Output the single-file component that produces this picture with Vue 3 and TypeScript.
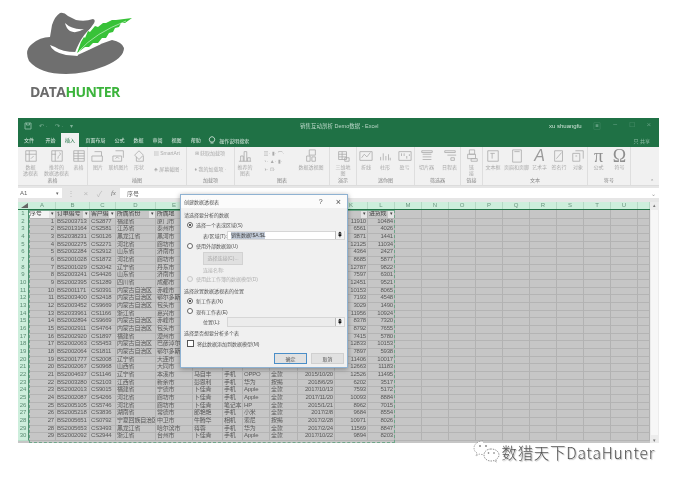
<script setup lang="ts">
type RibbonItem = { label: string; w: number; d?: string; glyph?: string };
type RibbonGroup = { name: string; w: number; items: RibbonItem[] };

const box = 'M2 2h12v12H2z';
const ribbon: RibbonGroup[] = [
  { name: '表格', w: 70, items: [
    { label: '数据\n透视表', w: 26, d: box + 'M2 6h12M6 2v12M8 11l3-3' },
    { label: '推荐的\n数据透视表', w: 26, d: box + 'M2 6h5M6 2v12M9 11q0-3 2-4t0-3' },
    { label: '表格', w: 18, d: box + 'M2 5h12M2 8h12M2 11h12M7 2v12' },
  ] },
  { name: '插图', w: 99, items: [
    { label: '图片', w: 21, d: 'M4 3h8v5M1 8h12v6H1z' },
    { label: '联机图片', w: 20, d: 'M4 2h9v8M1 8h10v6H1zM4 11l2-2 2 2' },
    { label: '形状', w: 21, d: 'M8 2l5 5-5 5-5-5zM5 9v5h8V8' },
    { label: '', w: 37, glyph: '▤ SmartArt\n\n◈ 屏幕截图 ·' },
  ] },
  { name: '加载项', w: 48, items: [
    { label: '', w: 48, glyph: '⊞ 获取加载项\n\n♦ 我的加载项 ·' },
  ] },
  { name: '图表', w: 95, items: [
    { label: '推荐的\n图表', w: 19, d: 'M3 14V8h3v6M7 14V3h3v11M11 14v-4h3v4M1 14h14' },
    { label: '', w: 39, glyph: '▥· ▮· ⌒·\n◔· ▲· ▮·\n◑· ⊡·' },
    { label: '数据透视图', w: 35, d: 'M6 1h7v6H6zM3 8h4v6H3zM9 9h4v5H9z' },
  ] },
  { name: '演示', w: 27, items: [
    { label: '三维地\n图', w: 27, d: 'M3 3h9v9H3zM3 6h9M3 9h9M7 3v9M10 10v4h5v-4z' },
  ] },
  { name: '迷你图', w: 58, items: [
    { label: '折线', w: 19, d: 'M1 3h14v10H1zM3 10l3-4 3 3 4-5' },
    { label: '柱形', w: 19, d: 'M3 13V9M6 13V5M9 13V8M12 13V6M14 13v-3' },
    { label: '盈亏', w: 20, d: 'M1 3h14v10H1zM4 8V5M7 8V5M10 8v3M13 8V6' },
  ] },
  { name: '筛选器', w: 46, items: [
    { label: '切片器', w: 24, d: 'M2 2h12v2H2zM3 6h10M3 9h10M3 12h10' },
    { label: '日程表', w: 22, d: 'M2 2h12v2H2zM5 7h10M9 10h4v3H9z' },
  ] },
  { name: '链接', w: 22, items: [
    { label: '链\n接', w: 22, d: 'M5 1h6v5H5zM3 6h9v5H3zM7 11h7v3H7z' },
  ] },
  { name: '文本', w: 105, items: [
    { label: '文本框', w: 21, d: 'M2 2h12v12H2zM5 5h5M7 5v6' },
    { label: '页眉和页脚', w: 26, d: 'M3 1h10v14H3zM5 3h6' },
    { label: '艺术字', w: 20, glyph: 'A' },
    { label: '签名行', w: 19, d: 'M3 2h9v12H3zM5 11l6-7' },
    { label: '对象', w: 19, d: 'M2 5h8v9H2zM5 2h9v9M5 8h2' },
  ] },
  { name: '符号', w: 43, items: [
    { label: '公式', w: 21, glyph: 'π' },
    { label: '符号', w: 21, glyph: 'Ω' },
  ] },
];

const tabs = ['文件', '开始', '插入', '页面布局', '公式', '数据', '审阅', '视图', '帮助'];

const colWidths = [27, 34, 26, 40, 37, 30, 20, 27, 28, 37, 33, 27, 27, 27, 27, 27, 27, 27, 27, 27, 27, 12];
const letters = 'ABCDEFGHIJKLMNOPQRSTUV'.split('');
letters[21] = '';
const template = `11px ${colWidths.map((w) => w + 'px').join(' ')}`;

// 客户 to 日期 sit under the dialog, so they stay blank here
const head = ['序号', '订单编号', '客户编', '所属省份', '所属地', '', '', '', '', '', '价格', '进货成'];
const raw = `BS2003713 CS2877 福建省 厦门市 - - - - - 11910 10484
BS2013164 CS2581 江苏省 泰州市 - - - - - 6561 4026
BS2038231 CS0126 黑龙江省 黑河市 - - - - - 3871 1441
BS2002275 CS2271 河北省 廊坊市 - - - - - 12125 11034
BS2002284 CS2912 山东省 济南市 - - - - - 4364 2427
BS2001028 CS1872 河北省 廊坊市 - - - - - 8685 5877
BS2001029 CS2042 辽宁省 丹东市 - - - - - 12787 9822
BS2003241 CS4426 山东省 济南市 - - - - - 7597 6301
BS2002395 CS1289 四川省 成都市 - - - - - 12451 9521
BS2001171 CS0391 内蒙古自治区 赤峰市 - - - - - 10153 8065
BS2003400 CS2418 内蒙古自治区 鄂尔多斯 - - - - - 7193 4548
BS2003452 CS9669 内蒙古自治区 包头市 - - - - - 3029 1490
BS2033961 CS1166 浙江省 嘉兴市 - - - - - 11956 10924
BS2002894 CS9669 内蒙古自治区 赤峰市 - - - - - 8378 7320
BS2002911 CS4764 内蒙古自治区 包头市 - - - - - 8792 7655
BS2002920 CS1897 福建省 漳州市 - - - - - 7415 5780
BS2002063 CS5453 内蒙古自治区 巴彦淖尔 - - - - - 12833 10153
BS2002064 CS1811 内蒙古自治区 鄂尔多斯 - - - - - 7897 5938
BS2001777 CS2008 辽宁省 大连市 - - - - - 11406 10017
BS2002067 CS0968 山西省 大同市 - - - - - 12663 11183
BS2004637 CS1146 辽宁省 本溪市 马自丰 手机 OPPO 全款 2015/10/20 12526 11495
BS2003280 CS2103 江西省 新余市 彭恩利 手机 华为 按揭 2018/6/29 6202 3517
BS2002013 CS9015 福建省 宁德市 卜佳青 手机 Apple 全款 2017/10/13 7593 5172
BS2002087 CS4266 河北省 廊坊市 卜佳青 手机 Apple 全款 2017/11/20 10093 8884
BS2005105 CS5746 河北省 廊坊市 卜佳青 笔记本 HP 全款 2015/1/21 8962 7015
BS2005218 CS3836 湖南省 常德市 郎艳艳 手机 小米 全款 2017/2/8 9684 8554
BS2005651 CS0792 宁夏回族自治区 中卫市 牛腾华 相机 索尼 按揭 2017/2/28 10971 8026
BS2005653 CS3493 黑龙江省 哈尔滨市 蒋蓉 手机 华为 全款 2017/2/24 11569 8847
BS2002092 CS2944 浙江省 台州市 卜佳青 手机 Apple 全款 2017/10/22 9894 8203`;

const rows = raw.split('\n').map((line, i) => {
  const p = line.split(' ').map((v) => (v === '-' ? '' : v));
  return [String(i + 1), ...p];
});
const numeric = new Set([0, 9, 10, 11]);
const blanks = Array.from({ length: 10 }, () => '');
</script>

<template>
  <div class="page">
    <header class="logo">
      <svg class="hat" width="140" height="86" viewBox="0 0 140 86">
        <path fill="#6f6f6f" d="M60 13Q64 12 68 16L76 20Q85 22 93 19Q97 20 92 26Q85 35 80 46L78 52L112 40Q122 42 124 48Q124 58 105 66Q85 74 66 74Q40 74 29 61Q24 50 32 44Q40 37 50 37L52 25Q55 16 60 13Z" />
        <path fill="#fff" d="M65 23Q72 30 84 29Q76 34 70 31Q66 28 65 23ZM50 45Q52 52 66 55L78 56L76 52Q62 52 55 47Z" />
        <path fill="none" stroke="#fff" stroke-width="3" d="M76 54Q84 32 98 25M100 43Q88 49 76 54" />
        <path fill="#38c238" d="M77 53L81 42L84 37L85 38L88 31L90 32L95 26L98 27L103 23L106 23L112 20L116 20L132 18L125 23L121 23L119 27L115 28L113 32L109 33L106 38L102 38L98 43L93 43L89 47L85 47Z" />
        <path fill="none" stroke="#e8f8e8" stroke-width=".6" d="M79 51Q95 33 126 21" />
      </svg>
      <div class="brand"><span>DATA</span><em>HUNTER</em></div>
    </header>

    <section class="excel">
      <div class="titlebar">
        <div class="qat">
          <svg width="8" height="8" viewBox="0 0 8 8"><path d="M1 1h6v6H1zM2.500 1v2h3V1" fill="none" stroke="#7fb398" /></svg>
          <span>↶ ·</span><span>↷ ·</span><span>▾</span>
        </div>
        <div class="doc">销售互动剖析 Demo数据 - Excel</div>
        <div class="user">xu shuangfu</div>
        <div class="winctl"><span>▣</span><span>−</span><span>□</span><span>×</span></div>
      </div>

      <nav class="tabs">
        <span v-for="t in tabs" :key="t" class="tab" :class="{ active: t === '插入' }">{{ t }}</span>
        <svg class="bulb" width="8" height="9" viewBox="0 0 8 9"><path d="M2.500 7h3M1.800 5a2.700 2.700 0 1 1 4.400 0l-.7 1h-3z" fill="none" stroke="#dfeee6" stroke-width=".8" /></svg>
        <span class="search">操作说明搜索</span>
        <span class="share">只 共享</span>
      </nav>

      <div class="ribbon">
        <div v-for="g in ribbon" :key="g.name" class="group" :style="{ width: g.w + 'px' }">
          <div class="items">
            <div v-for="(it, idx) in g.items" :key="idx" class="item" :style="{ width: it.w + 'px' }">
              <svg v-if="it.d" width="14" height="14" viewBox="0 0 16 16"><path :d="it.d" fill="none" stroke="#a9a9a9" stroke-width=".9" /></svg>
              <div v-else-if="it.label" class="bigglyph" :class="{ wordart: it.glyph === 'A' }">{{ it.glyph }}</div>
              <div v-if="!it.label" class="multi">{{ it.glyph }}</div>
              <div v-if="it.label" class="ilabel">{{ it.label }}</div>
            </div>
          </div>
          <div class="gname">{{ g.name }}</div>
        </div>
        <div class="collapse">⌃</div>
      </div>

      <div class="formula">
        <div class="namebox">A1<i>▾</i></div>
        <div class="fbtns"><span>⋮</span><span>×</span><span>✓</span><em>fx</em></div>
        <div class="finput">序号<i>⌄</i></div>
      </div>

      <div class="sheet-wrap">
        <div class="sheet">
          <div class="row colhead" :style="{ gridTemplateColumns: template }">
            <div class="corner"></div>
            <div v-for="l in letters" :key="l" class="hcell">{{ l }}</div>
          </div>
          <div class="row" :style="{ gridTemplateColumns: template }">
            <div class="rnum">1</div>
            <div v-for="(h, i) in head" :key="i" class="cell thead" :class="{ on: i === 0 }">{{ h }}<b v-if="h">▾</b></div>
            <div v-for="(b, i) in blanks" :key="i" class="cell"></div>
          </div>
          <div v-for="(r, ri) in rows" :key="ri" class="row" :style="{ gridTemplateColumns: template }">
            <div class="rnum">{{ ri + 2 }}</div>
            <div v-for="(c, ci) in r" :key="ci" class="cell" :class="{ num: numeric.has(ci) }">{{ c }}</div>
            <div v-for="(b, i) in blanks" :key="i" class="cell"></div>
          </div>
          <div class="ants"></div>
        </div>
        <div class="vscroll"><span>▴</span><i></i><span>▾</span></div>

        <div class="dialog">
          <div class="dtitle"><span>创建数据透视表</span><span class="q">?</span><span class="x">×</span></div>
          <div class="dbody">
            <div class="line sec">请选择要分析的数据</div>
            <div class="line opt"><i class="radio on"></i>选择一个表或区域(S)</div>
            <div class="line field">
              <label>表/区域(T):</label>
              <div class="input"><span class="sel">销售数据!$A:$L</span><b>⇞</b></div>
            </div>
            <div class="line opt"><i class="radio"></i>使用外部数据源(U)</div>
            <div class="connect">选择连接(C)...</div>
            <div class="line dim ind">连接名称:</div>
            <div class="line opt dim"><i class="radio off"></i>使用此工作簿的数据模型(D)</div>
            <div class="line sec gap">选择放置数据透视表的位置</div>
            <div class="line opt"><i class="radio on"></i>新工作表(N)</div>
            <div class="line opt"><i class="radio"></i>现有工作表(E)</div>
            <div class="line field">
              <label>位置(L):</label>
              <div class="input grey"><b>⇞</b></div>
            </div>
            <div class="line sec">选择是否想要分析多个表</div>
            <div class="line opt check"><i class="cb"></i>将此数据添加到数据模型(M)</div>
            <div class="actions"><button class="ok">确定</button><button>取消</button></div>
          </div>
        </div>
      </div>
    </section>

    <footer class="mark">
      <svg width="28" height="24" viewBox="0 0 28 24">
        <path d="M10 1C5 1 1 4 1 8c0 2 1 4 3 5l-1 3 3-2c1 .4 3 .6 4 .5" fill="#fff" stroke="#888" stroke-width=".7" stroke-dasharray="1.500 1" />
        <path d="M18 9c-4 0-7 2.500-7 6s3 6 7 6c1 0 2 0 3-.5l2.500 1.500-.7-2.500c2-1 3.200-2.700 3.200-4.500 0-3.500-3.500-6-8-6z" fill="#fff" stroke="#666" stroke-width=".7" stroke-dasharray="1.500 1" />
        <circle cx="7" cy="6" r="1" fill="#888" /><circle cx="13" cy="6" r="1" fill="#888" />
        <circle cx="15.500" cy="13" r=".8" fill="#666" /><circle cx="21" cy="13" r=".8" fill="#666" />
      </svg>
      <span><u>数猎天下</u><em>DataHunter</em></span>
    </footer>
  </div>
</template>

<style scoped>
.page {
  width: 675px;
  height: 481px;
  overflow: hidden;
  background: #fff;
  font-family: "Liberation Sans", "Noto Sans CJK SC", sans-serif;
}

.logo {
  height: 118px;
  box-sizing: border-box;
  filter: blur(0.4px);
}

.hat {
  display: block;
}

.brand {
  margin: -1px 0 0 30px;
  font: 700 14px/14px "Open Sans", sans-serif;
  letter-spacing: -0.600px;
  color: #6b6b6b;
}

.brand em {
  font-style: normal;
  color: #3cb43c;
}

.excel {
  margin-left: 18px;
  width: 641px;
  height: 325px;
  display: flex;
  flex-direction: column;
  background: #e6e6e6;
  font-size: 6px;
  color: #555;
  filter: blur(0.45px);
  overflow: hidden;
}

.titlebar {
  height: 15px;
  flex: none;
  display: flex;
  align-items: center;
  background: #1f7145;
  color: #7fb398;
}

.qat {
  display: flex;
  align-items: center;
  gap: 7px;
  width: 282px;
  padding-left: 6px;
  box-sizing: border-box;
}

.doc {
  width: 249px;
  font-size: 5.500px;
  color: #bcd8c9;
}

.user {
  width: 44px;
  color: #cfe4d8;
}

.winctl {
  display: flex;
  gap: 12px;
  color: #5f9d7e;
  font-size: 8px;
}

.tabs {
  height: 14px;
  flex: none;
  display: flex;
  align-items: center;
  background: #1f7145;
  color: #dcebe3;
  font-size: 5px;
}

.tab {
  padding: 0 4.500px;
  line-height: 14px;
  white-space: nowrap;
}

.tab:first-child {
  margin-left: 1.500px;
  padding-right: 7px;
}

.tab.active {
  background: #f1f1f1;
  color: #217346;
  margin: 0 2px 0 1px;
  padding: 0 4px;
}

.bulb {
  margin-left: 3px;
}

.search {
  margin-left: 3px;
}

.share {
  margin-left: auto;
  margin-right: 9px;
  color: #8fbda6;
}

.ribbon {
  height: 38px;
  flex: none;
  display: flex;
  background: #f1f1f1;
  border-bottom: 1px solid #dcdcdc;
  position: relative;
  color: #aaa;
  font-size: 5px;
}

.group {
  display: flex;
  flex-direction: column;
  flex: none;
  border-right: 1px solid #dedede;
  box-sizing: border-box;
}

.items {
  flex: 1;
  display: flex;
  justify-content: center;
  padding-top: 2px;
}

.item {
  flex: none;
  display: flex;
  flex-direction: column;
  align-items: center;
  line-height: 6px;
}

.ilabel {
  white-space: pre-line;
  text-align: center;
  margin-top: 1px;
  font-size: 5px;
}

.multi {
  white-space: pre;
  line-height: 8px;
  font-size: 5px;
  color: #aaa;
}

.bigglyph {
  height: 14px;
  font: 400 18px/14px "Liberation Serif", serif;
  color: #8f8f8f;
}

.bigglyph.wordart {
  font: italic 400 16px/14px "Liberation Sans", sans-serif;
  color: #9a9a9a;
}

.gname {
  height: 9px;
  line-height: 8px;
  text-align: center;
  color: #888;
  font-size: 5px;
}

.collapse {
  position: absolute;
  right: 5px;
  bottom: 1px;
  color: #888;
}

.formula {
  flex: none;
  height: 10px;
  margin: 2px 0 4px;
  display: flex;
  align-items: stretch;
  color: #666;
}

.namebox {
  width: 44px;
  display: flex;
  justify-content: space-between;
  align-items: center;
  background: #fff;
  padding: 0 3px 0 2px;
  box-sizing: border-box;
}

.namebox i {
  font-style: normal;
  font-size: 5px;
}

.fbtns {
  width: 58px;
  display: flex;
  align-items: center;
  justify-content: space-between;
  padding: 0 4px 0 5px;
  box-sizing: border-box;
  color: #bbb;
  font-size: 8px;
}

.fbtns em {
  font: italic 7px "Liberation Serif", serif;
  color: #777;
}

.finput {
  flex: 1;
  display: flex;
  justify-content: space-between;
  align-items: center;
  background: #fff;
  padding: 0 3px 0 7px;
}

.finput i {
  font-style: normal;
  color: #999;
}

.sheet-wrap {
  flex: 1;
  display: flex;
  position: relative;
  min-height: 0;
}

.sheet {
  width: 632px;
  position: relative;
  overflow: hidden;
  background: #c6c6c6;
}

.row {
  display: grid;
  height: 7.680px;
  line-height: 7.600px;
}

.colhead {
  height: 8px;
  line-height: 7px;
  background: #cdeedc;
  border-bottom: 1px solid #217346;
  box-sizing: border-box;
  color: #6a957f;
}

.corner {
  clip-path: polygon(100% 0, 100% 100%, 0 100%);
  background-color: #666;
  width: 7px;
  height: 5px;
  margin: 1px 0 0 3px;
}

.hcell {
  text-align: center;
  border-right: 1px solid #b5d8c5;
}

.rnum {
  background: #cdeedc;
  color: #5a8a72;
  text-align: center;
  border-right: 1px solid #4d9270;
  border-bottom: 1px solid #b9e0cb;
  box-sizing: border-box;
}

.cell {
  box-sizing: border-box;
  border-right: 1px solid #b2b2b2;
  border-bottom: 1px solid #b4b4b4;
  padding: 0 1px;
  overflow: hidden;
  white-space: nowrap;
  color: #5a5a5a;
  letter-spacing: -0.200px;
}

.cell.num {
  text-align: right;
}

.thead {
  position: relative;
  color: #444;
}

.thead.on {
  background: #f4f4f4;
}

.thead b {
  position: absolute;
  right: 0;
  top: 0;
  width: 6px;
  background: #e4e4e4;
  text-align: center;
  font-size: 5px;
  font-weight: 400;
}

.ants {
  position: absolute;
  left: 11px;
  top: 8px;
  width: 366px;
  bottom: 0;
  box-sizing: border-box;
  border: 1px dashed #6fa68a;
  border-top-style: solid;
}

.vscroll {
  width: 9px;
  display: flex;
  flex-direction: column;
  justify-content: space-between;
  background: #ececec;
  text-align: center;
  color: #777;
  font-size: 5px;
}

.vscroll i {
  flex: 1;
  margin: 2px 1px;
  background: #f7f7f7;
}

.dialog {
  position: absolute;
  left: 162px;
  top: -8px;
  width: 168px;
  height: 174px;
  box-sizing: border-box;
  background: #f0f0f0;
  border: 1px solid #8fb2d2;
  box-shadow: 0 1px 5px rgba(0, 0, 0, 0.35);
  color: #555;
  display: flex;
  flex-direction: column;
  font-size: 5px;
}

.dtitle {
  height: 13px;
  flex: none;
  display: flex;
  align-items: center;
  background: #fbfbfb;
  padding: 0 6px 0 3px;
}

.dtitle span:first-child {
  flex: 1;
}

.q {
  margin-right: 13px;
  font-size: 7px;
}

.x {
  font-size: 9px;
}

.dbody {
  flex: 1;
  display: flex;
  flex-direction: column;
  padding: 1px 3px 3px;
}

.line {
  height: 10.500px;
  flex: none;
  display: flex;
  align-items: center;
  white-space: nowrap;
}

.sec.gap {
  margin-top: 1px;
}

.opt {
  padding-left: 3px;
  gap: 3px;
}

.radio {
  width: 6px;
  height: 6px;
  box-sizing: border-box;
  border: 1px solid #666;
  border-radius: 50%;
  background: #fff;
  position: relative;
}

.radio.on::after {
  content: "";
  position: absolute;
  left: 1px;
  top: 1px;
  width: 2px;
  height: 2px;
  border-radius: 50%;
  background: #222;
}

.radio.off {
  border-color: #c8c8c8;
  background: #eee;
}

.dim {
  color: #b0b0b0;
}

.ind {
  padding-left: 19px;
  height: 8.500px;
}

.field {
  padding-left: 19px;
}

.field label {
  width: 24px;
  flex: none;
}

.input {
  flex: 1;
  height: 9.500px;
  margin-right: -1px;
  display: flex;
  align-items: center;
  background: #fff;
  border: 1px solid #d6d6d6;
  box-sizing: border-box;
  padding-left: 3px;
}

.input.grey {
  background: #ececec;
}

.sel {
  background: #c3ccd9;
  color: #444;
  line-height: 7px;
}

.input b {
  width: 8px;
  margin-left: auto;
  text-align: center;
  font-size: 7px;
  color: #111;
  background: #f4f4f4;
  border-left: 1px solid #bbb;
}

.connect {
  flex: none;
  width: 38px;
  height: 11px;
  margin: 1px 0 0 19px;
  line-height: 11px;
  text-align: center;
  background: #e0e0e0;
  border: 1px solid #d2d2d2;
  color: #aaa;
  font-size: 5px;
}

.check {
  margin-top: 1px;
}

.cb {
  width: 5px;
  height: 5px;
  border: 1px solid #555;
  background: #fff;
}

.actions {
  margin-top: auto;
  display: flex;
  justify-content: flex-end;
  gap: 4px;
}

.actions button {
  width: 33px;
  height: 11px;
  padding: 0;
  background: #e1e1e1;
  border: 1px solid #d0d0d0;
  font: 5px "Noto Sans CJK SC", sans-serif;
  color: #555;
}

.actions button.ok {
  border: 1px solid #4a8ec8;
}

.mark {
  height: 38px;
  display: flex;
  justify-content: flex-end;
  align-items: flex-start;
  padding-right: 20px;
  color: #555;
  font-family: "Noto Sans CJK SC", sans-serif;
  font-size: 15.500px;
  line-height: 18px;
  filter: blur(0.3px);
}

.mark svg {
  margin-top: -3px;
}

.mark span {
  text-shadow: 1px 1px 1px #bbb;
  font-weight: 300;
}

.mark u {
  text-decoration: none;
  letter-spacing: 0.700px;
}

.mark em {
  font-style: normal;
  letter-spacing: 0.800px;
}
</style>
